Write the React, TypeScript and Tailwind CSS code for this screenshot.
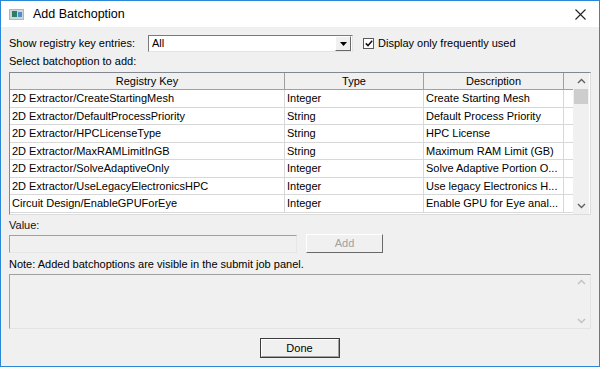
import React from "react";

type Row = { key: string; type: string; desc: string };

const rows: Row[] = [
  { key: "2D Extractor/CreateStartingMesh", type: "Integer", desc: "Create Starting Mesh" },
  { key: "2D Extractor/DefaultProcessPriority", type: "String", desc: "Default Process Priority" },
  { key: "2D Extractor/HPCLicenseType", type: "String", desc: "HPC License" },
  { key: "2D Extractor/MaxRAMLimitInGB", type: "String", desc: "Maximum RAM Limit (GB)" },
  { key: "2D Extractor/SolveAdaptiveOnly", type: "Integer", desc: "Solve Adaptive Portion O..." },
  { key: "2D Extractor/UseLegacyElectronicsHPC", type: "Integer", desc: "Use legacy Electronics H..." },
  { key: "Circuit Design/EnableGPUForEye", type: "Integer", desc: "Enable GPU for Eye anal..." },
];

const Chevron = ({ up, color = "#606060" }: { up?: boolean; color?: string }) => (
  <svg width="9" height="6" viewBox="0 0 9 6">
    <path
      d={up ? "M1 5L4.5 1.5L8 5" : "M1 1L4.5 4.5L8 1"}
      fill="none"
      stroke={color}
      strokeWidth="1.4"
    />
  </svg>
);

const App: React.FC = () => {
  return (
    <div
      className="w-[600px] h-[367px] border border-[#2b88d8] bg-[#f0f0f0] flex flex-col text-[11px] text-black overflow-hidden"
      style={{ fontFamily: '"Liberation Sans", Arial, sans-serif' }}
    >
      {/* title bar */}
      <div className="h-[26px] bg-white flex items-center shrink-0">
        <div className="ml-[8px] w-[15px] h-[11px] bg-[#cfd6d6] border border-[#b0b8b8] flex items-center pl-[2px]">
          <div className="w-[5px] h-[6px] bg-[#2e7d6a]" />
          <div className="w-[4px] h-[5px] ml-[1px] bg-[#4f8fc9]" />
        </div>
        <span className="ml-[9px] text-[12.5px] text-black">Add Batchoption</span>
        <div className="ml-auto mr-[13px]">
          <svg width="11" height="11" viewBox="0 0 11 11">
            <path d="M0.5 0.5L10.5 10.5M10.5 0.5L0.5 10.5" stroke="#222" strokeWidth="1.1" />
          </svg>
        </div>
      </div>

      <div className="flex flex-col px-[8px]">
        {/* filter row */}
        <div className="flex items-center mt-[8px] h-[17px]">
          <span className="w-[139px]">Show registry key entries:</span>
          <div className="w-[205px] h-[17px] bg-white border border-t-[#7a7a7a] border-l-[#7a7a7a] border-b-[#e3e3e3] border-r-[#e3e3e3] flex items-center">
            <span className="pl-[3px] flex-1">All</span>
            <div className="w-[16px] h-[15px] mr-[1px] bg-[#f0f0f0] border border-t-white border-l-white border-b-[#696969] border-r-[#696969] flex items-center justify-center">
              <svg width="7" height="4" viewBox="0 0 7 4">
                <path d="M0 0H7L3.5 4Z" fill="#000" />
              </svg>
            </div>
          </div>
          <div className="ml-[10px] w-[11px] h-[11px] bg-white border border-[#5a5a5a] flex items-center justify-center">
            <svg width="8" height="7" viewBox="0 0 8 7">
              <path d="M0.8 3.4L3 5.6L7.2 0.8" fill="none" stroke="#111" strokeWidth="1.5" />
            </svg>
          </div>
          <span className="ml-[4px]">Display only frequently used</span>
        </div>

        <div className="mt-[2px] h-[15px] leading-[15px]">Select batchoption to add:</div>

        {/* table */}
        <div className="mt-[3px] w-[582px] h-[143px] bg-white border border-t-[#828790] border-l-[#828790] border-b-[#dcdcdc] border-r-[#dcdcdc] flex">
          <div className="flex-1 flex flex-col">
            <div className="flex h-[17px] bg-[#f0f0f0] border-b border-[#a0a0a0]">
              <div className="w-[275px] border-r border-[#a0a0a0] text-center leading-[16px]">Registry Key</div>
              <div className="w-[139px] border-r border-[#a0a0a0] text-center leading-[16px]">Type</div>
              <div className="w-[140px] border-r border-[#a0a0a0] text-center leading-[16px]">Description</div>
              <div className="w-[9px]" />
            </div>
            {rows.map((r) => (
              <div key={r.key} className="flex h-[17.5px] border-b border-[#d8d8d8]">
                <div className="w-[275px] pl-[2px] border-r border-[#d8d8d8] leading-[17px] truncate">{r.key}</div>
                <div className="w-[139px] pl-[2px] border-r border-[#d8d8d8] leading-[17px]">{r.type}</div>
                <div className="w-[140px] pl-[2px] border-r border-[#d8d8d8] leading-[17px] whitespace-nowrap overflow-hidden">{r.desc}</div>
              </div>
            ))}
          </div>
          {/* scrollbar */}
          <div className="w-[16px] bg-[#f0f0f0] flex flex-col items-center mr-[1px]">
            <div className="h-[16px] flex items-center justify-center">
              <Chevron up />
            </div>
            <div className="w-[14px] h-[15px] bg-[#cdcdcd]" />
            <div className="flex-1" />
            <div className="h-[16px] flex items-center justify-center">
              <Chevron />
            </div>
          </div>
        </div>

        <div className="mt-[3px] h-[14px] leading-[14px] text-[#111]">Value:</div>

        <div className="flex mt-[2px] items-center">
          <div className="w-[288px] h-[18px] bg-[#f0f0f0] border border-t-[#a0a0a0] border-l-[#a0a0a0] border-b-[#e6e6e6] border-r-[#e6e6e6]" />
          <div className="ml-[9px] w-[77px] h-[19px] border border-t-white border-l-white border-b-[#696969] border-r-[#696969] flex items-center justify-center text-[#a0a0a0]">
            Add
          </div>
        </div>

        <div className="mt-[4px] h-[14px] leading-[14px]">Note: Added batchoptions are visible in the submit job panel.</div>

        {/* message box */}
        <div className="mt-[3px] w-[582px] h-[55px] border border-t-[#a0a0a0] border-l-[#a0a0a0] border-b-[#e3e3e3] border-r-[#e3e3e3] flex">
          <div className="flex-1" />
          <div className="w-[16px] flex flex-col items-center justify-between py-[4px] mr-[1px]">
            <Chevron up color="#c0c0c0" />
            <Chevron color="#c0c0c0" />
          </div>
        </div>

        <div className="flex justify-center mt-[9px]">
          <div className="w-[80px] h-[20px] border border-[#3c3c3c] bg-[#f0f0f0] flex items-center justify-center ml-[-1px]">
            <div className="w-full h-full border border-t-white border-l-white border-b-[#a0a0a0] border-r-[#a0a0a0] flex items-center justify-center">
              Done
            </div>
          </div>
        </div>
      </div>
    </div>
  );
};

export default App;
